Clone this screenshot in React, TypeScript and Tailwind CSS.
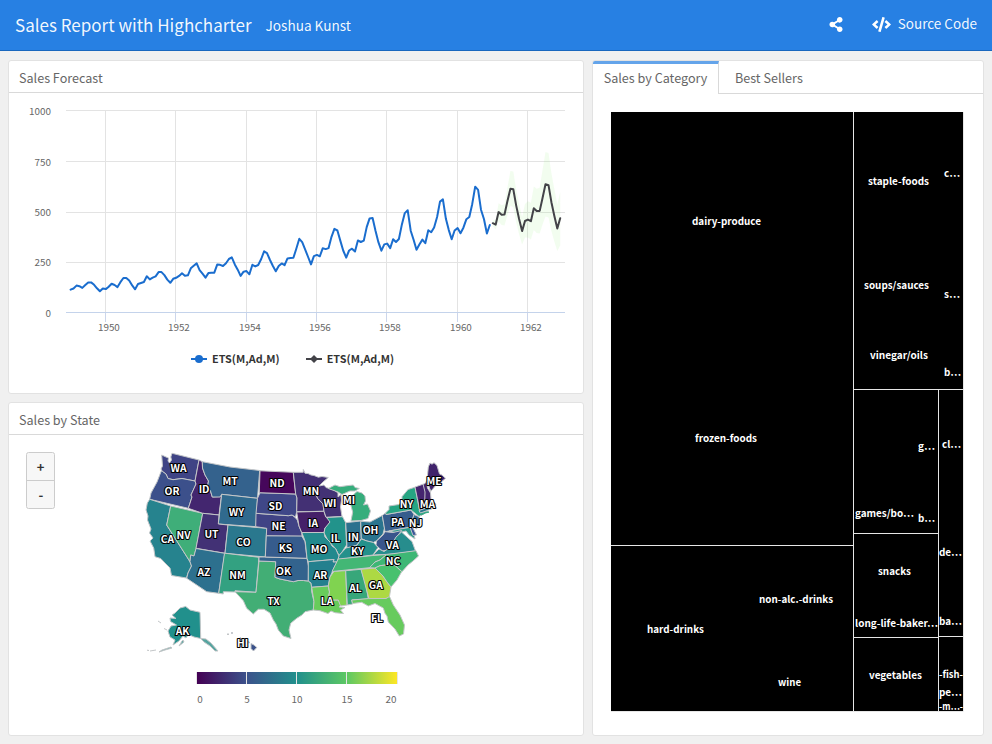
import { FaCode, FaShareAlt } from "react-icons/fa";

const AIR = [
  112, 118, 132, 129, 121, 135, 148, 148, 136, 119, 104, 118, 115, 126, 141, 135, 125, 149, 170, 170, 158, 133, 114, 140,
  145, 150, 178, 163, 172, 178, 199, 199, 184, 162, 146, 166, 171, 180, 193, 181, 183, 218, 230, 242, 209, 191, 172, 194,
  196, 196, 236, 235, 229, 243, 264, 272, 237, 211, 180, 201, 204, 188, 235, 227, 234, 264, 302, 293, 259, 229, 203, 229,
  242, 233, 267, 269, 270, 315, 364, 347, 312, 274, 237, 278, 284, 277, 317, 313, 318, 374, 413, 405, 355, 306, 271, 306,
  315, 301, 356, 348, 355, 422, 465, 467, 404, 347, 305, 336, 340, 318, 362, 348, 363, 435, 491, 505, 404, 359, 310, 337,
  360, 342, 406, 396, 420, 472, 548, 559, 463, 407, 362, 405, 417, 391, 419, 461, 472, 535, 622, 606, 508, 461, 390, 432,
];
const FORECAST = [
  441, 434, 496, 483, 484, 550, 612, 609, 528, 462, 402, 452, 459, 451, 515, 502, 502, 567, 634, 629, 545, 478, 415, 466,
];
const UPPER = [
  455, 460, 540, 530, 535, 615, 700, 697, 608, 537, 472, 536, 550, 542, 623, 612, 617, 706, 793, 788, 690, 610, 533, 595,
];
const LOWER = [
  427, 410, 450, 432, 430, 480, 527, 520, 446, 386, 336, 370, 371, 361, 408, 392, 390, 436, 475, 470, 403, 350, 303, 330,
];
const px = (month: number) => 70.6 + (month * 35.18) / 12;
const py = (value: number) => 312.3 - value * 0.202;
const line = (values: number[], start: number) =>
  values.map((v, i) => `${px(start + i).toFixed(1)},${py(v).toFixed(1)}`).join(" ");
const band = line(UPPER, 144) + " " + line(LOWER, 144).split(" ").reverse().join(" ");

const FONT = "font-['Noto_Sans_CJK_SC',sans-serif]";

const STATES: [string, string][] = [
  ["#3f4485", "M161.7 455L166 457 168.5 458 168 461 169.5 463 171.5 460 170.8 457 172 453.3 199 460 195 481 187 479.5 182 478.5 173 479.7 168 478.5 166 474 162.5 471.5 161 469 162.5 466z"],
  ["#3c508b", "M161.3 471L162.5 471.5 166 474 168 478.5 173 479.7 182 478.5 195 481 196 484 191 495 192 497 188.3 508.3 149.7 499.3 151 493 157 482z"],
  ["#26838e", "M149.7 499.3L170.7 506 166.7 525 190 561.7 191.5 566 188 573 186.5 578 171.5 575.5 170 568 165 563 160.7 558.5 155 556.7 153.7 548 150 541 153 538 149.5 533 151 529 147.5 520 148 516 146 510 147.3 503z"],
  ["#3fae79", "M170.7 506L202.7 513.3 196 549 194 556 190.7 555 190 561.7 166.7 525z"],
  ["#43266f", "M199 460L202.3 461.7 202.5 468 205 475 208.5 481 207.5 486.5 210.5 491 212.3 497 220 496.5 221.5 495 219 515 202.7 513.3 188.3 508.3 192 497 191 495 196 484 195 481z"],
  ["#34628d", "M202.3 461.7L230 467 259.7 470.5 257.5 498.3 221.7 494.3 220 497 212.3 497 210.5 491 207.5 486.5 208.5 481 205 475 202.5 468z"],
  ["#306a8e", "M221.7 494.3L257.5 498.3 256 526.7 218.3 524z"],
  ["#423175", "M202.7 513.3L219 515 218.3 524 228 525 225 553.3 196 548.3z"],
  ["#2a788e", "M228 525L266.7 528.3 265.3 557 225 553.3z"],
  ["#2d708e", "M196 548.5L224.8 553.3 218.7 593.3 206.7 591.7 186.7 578.3 188 573 191.5 566 190 561.7 190.7 555 194 556z"],
  ["#33a181", "M224.5 553.2L259 557.3 256 592.3 235 590.7 235 592 223.3 591.7 223.3 594 218.7 593.3z"],
  ["#42ae75", "M259 561L275.7 561.7 275 577.3 280 579 285 580 293.3 581.7 298 580.5 303.3 580.5 308.3 581 311.3 583.5 311.7 591.7 314 601.7 313.3 610 305 611.7 302 615 296.7 618.3 290.7 623.3 289 630 291 638.5 283.3 636 278.3 630 276 624 273.3 620 270 613 264 609.3 258.3 609.3 253.3 614 246.7 608.3 243.3 600.7 235 591.7 256 592.3z"],
  ["#33638d", "M259 557L265 557 307 558.3 308.5 566 308.3 581 303.3 580.5 298 580.5 293.3 581.7 285 580 280 579 275 577.3 275.7 561.7 259 561z"],
  ["#365c8d", "M266.3 535.7L301.7 535.7 305 541.7 307 558.3 265.3 557z"],
  ["#404385", "M256 513.3L288.3 515.7 292 515 295 517.3 297.3 520 299 526 301.7 532.5 302 536 266.3 535.7 266.7 528.3 255.7 526.7z"],
  ["#3f4788", "M260 492.7L295.7 494 297 498 296.7 511.7 295.5 517 292 515 288.3 515.7 256 513.3 257.5 498.3z"],
  ["#46075b", "M260 470.8L293.3 472.3 295.7 494 259.3 492.7z"],
  ["#433074", "M293.3 472.3L303.3 472.3 303.3 469.5 305 473.3 308 473.5 311 475 314 475.5 318.3 477.2 322 476.5 328.3 477.5 323 482 319 486 317.3 490 316 495 317.8 498.5 323 504 324 511.3 296.7 511.7 297 498 295.7 494z"],
  ["#452069", "M296.7 512L324 511.3 325.7 516.7 330 521 329 524 325 528 324 532.5 301.7 532.5 299 526z"],
  ["#433275", "M319 486L324 485 326 487.5 334 490 338 493 338 497 341 494.5 341.5 500 340.5 507 342 516.5 326 517.3 324 511.3 323 504 317.8 498.5 316 495z"],
  ["#36ad7c", "M328.3 488.5L335 485 340 486.7 347 485.7 353.3 485 355 487.5 359.3 488.5 355 491 350 491 342 494.5 338 492z"],
  ["#36ad7c", "M354 494L357 491.5 362 493 365 496 365.5 501 363.5 505 367.5 504 370.5 511 368 518.5 361 520.5 351 521 352.7 512 350.5 504z"],
  ["#22938b", "M326.5 517.5L342.5 516.7 345.7 522.7 346.5 545 342 552 339 555.5 335.5 548.5 328 540.5 324 533 325 528 330 522z"],
  ["#2d718e", "M345.7 522.7L360.5 521 361.3 538.5 357 545 347 548.5 346.5 537z"],
  ["#2b748e", "M360.7 521.3L370 522 382.3 515.5 384.5 528 383 534 377 540.5 373.3 542.5 366.7 541 361.3 538.5z"],
  ["#365d8d", "M382.3 515.5L385.5 513 386 514.5 411 510 414 514.5 412.3 520 414.5 524 410 527.3 385 531.7z"],
  ["#27a583", "M385.5 513L389 509.5 389 506 399 504.5 402 501.5 402 496.7 408 489.5 415 487.2 417.3 498.3 419.8 512 428 511.5 419 516.5 411 510 386 514.5z"],
  ["#45256f", "M415 487L425 483.5 426.5 481 427.5 488 430.5 493 431 499 436 504 434 508 429 507 419.8 510.5 417.3 498.3z"],
  ["#40236b", "M427 480.5L428.3 467 430 463 432 464.2 434 462.7 437 465.5 439.5 474 442 475 445.5 478.3 440 483 436.5 484.5 430.7 491.5z"],
  ["#2a788e", "M419 510.5L429 507 431.5 509 420.5 513z"],
  ["#31668e", "M414 514.5L419 516.7 420 523 416.5 529 413 526 414.5 524 412.3 520z"],
  ["#2b998a", "M389 531L410 527.3 414 534 415 539 409 535 406 531 402 532 397 533z"],
  ["#3b569a", "M410 527.3L412 526 416.5 535 413 535.5z"],
  ["#39558c", "M385 531.7L393 532.5 401.7 530.5 397 536.5 393 544 388 550 382.3 551 376 545 376.5 541 383 535z"],
  ["#278d8d", "M373 555L379 549 384 551.5 390 547.5 396 537 401.5 532 407 537 412 541.5 415.5 551 395 554z"],
  ["#24918b", "M337.5 560L339 555.5 346 548 357 545.3 361.3 539 367 541 373.5 542.5 378 547.5 373 555 350 558z"],
  ["#23898d", "M301.8 532.5L324 532.5 325 537 330 542 332 546 335.5 548.5 339 556 337 562 333 562 334 559.5 308.3 561.7 307 558.3 305.3 541.7z"],
  ["#24808e", "M308.3 561.7L334 559.5 333 562 337 562 334 568 330 577 328.3 586 311.7 587.3 311 583 308.3 581z"],
  ["#68cc5b", "M311.7 587.3L328.3 586 329.5 592 328 600 338.3 600 341 605 339 607 345 607.5 340.5 610 343.5 613.5 335 612.7 331 611 328 613.5 320 610.7 313.3 610 314 601.7z"],
  ["#80d350", "M334 571.3L345.7 570.7 347 605 340.5 606 338.3 600 328 600 329.5 592 328.3 586 330 577z"],
  ["#37a77a", "M345.7 570.7L361 569.3 366 585 368.3 599 351.7 600 352.7 604 347.3 605z"],
  ["#add943", "M361 569.3L375.3 568 383 576 387 582 391 587 389.3 597.5 386 598.5 369 599z"],
  ["#67cb5e", "M351.7 600L368.3 598.6 386 598.5 389.5 596.5 393.3 605 400 615 404.5 625 403.5 634 399.3 636 395 629 388.3 622 387 616 385 613.3 383.3 608 375 603.5 368.3 606 361.7 602.3 352.5 603.5z"],
  ["#43b775", "M337 561.5L338 559 373 555.5 386.7 554.5 380 560 375 562 369.5 567.7 332 571.5z"],
  ["#3eb775", "M386.7 554.5L416 550.7 418.5 556 413 561 408 565 402 571.7 395 565.5 388.3 564.7 380 565.7 375 568 369.5 567.7 375 562 380 560z"],
  ["#48c16e", "M375 568L380 565.7 388.3 564.7 395 565.5 401.7 571.7 397 580 391 587 387 582 383 576z"],
  ["#21908c", "M175 613L180 608 185.7 606.5 190 610 200 612.3 200.7 638.5 194 637 188.3 634.5 186 638 183 636 179 641 173 645 175 640 170 637 168 631 171 626 176.5 625 170.5 621.5 170 618 176 618.5 172 615z"],
  ["#55a49f", "M200.7 638.5L206 639 211 643 218 651 215 651 210 646 204 642z"],
  ["#55a49f", "M183 640L184 642 179 646 182 641zM171 647L172 648 165 650 159 652 162 650zM156 650L150 651M158 621L161 623M164 628.5L167 630M147 650.2L149 650.5"],
  ["#3b528b", "M251 643.5L254 645 256.8 647.5 253.5 651 251 648.5zM248 641.5L250 642.5 248.5 643zM240 637.5L242 639 240 639zM227 634L229 634 228 635zM231.5 632.5L233 633 231.5 633.5z"],
];

const STATE_LABELS: [string, number, number][] = [
  ["WA", 178.5, 468], ["OR", 172, 491], ["CA", 167.5, 539], ["NV", 183.5, 535], ["ID", 204, 489], ["MT", 230, 481],
  ["WY", 236.5, 512], ["UT", 211.5, 534], ["CO", 243.5, 542], ["AZ", 204, 572], ["NM", 237.5, 575], ["ND", 277, 483],
  ["SD", 275.5, 506], ["NE", 278.5, 526], ["KS", 285.5, 548], ["OK", 283.5, 571], ["TX", 273.5, 601], ["MN", 311, 491],
  ["IA", 313, 523], ["WI", 330, 503], ["MO", 319, 549], ["AR", 320.5, 575], ["LA", 327, 601], ["IL", 335.5, 538],
  ["MI", 349, 500], ["IN", 353.3, 537], ["OH", 370.5, 530], ["KY", 357.5, 551], ["PA", 397.5, 522], ["NJ", 415.5, 523],
  ["NY", 406.5, 504], ["MA", 427.5, 504], ["ME", 434, 481], ["VA", 392.5, 545], ["NC", 393, 561], ["AL", 355.5, 588],
  ["GA", 375.8, 585], ["FL", 377, 618], ["AK", 182.5, 631], ["HI", 242.5, 643],
];

const TREE_LABELS: [string, number, number, number][] = [
  ["dairy-produce", 692, 221, 69], ["frozen-foods", 695, 438, 62], ["non-alc.-drinks", 759, 599, 74],
  ["hard-drinks", 647, 629, 57], ["wine", 778, 682, 23], ["staple-foods", 868, 181, 61], ["soups/sauces", 864, 285, 65],
  ["vinegar/oils", 870, 355, 58], ["c…", 944, 173, 16], ["s…", 944, 294, 16], ["b…", 944, 372, 17], ["g…", 918, 446, 17],
  ["games/bo…", 855, 513, 59], ["b…", 918, 518, 17], ["cl…", 942, 444, 19], ["snacks", 878, 571, 33],
  ["long-life-baker…", 855, 623, 83], ["vegetables", 869, 675, 53], ["de…", 939, 552, 23], ["ba…", 939, 621, 23],
  ["-fish-", 939, 674, 24], ["pe…", 939, 692, 23], ["-m…-", 939, 706, 24],
];

function CardTitle({ children }: { children: string }) {
  return <h2 className="flex h-8 shrink-0 items-center border-b border-[#d9d9d9] pl-2.5 pt-[3px] text-[12.6px]">{children}</h2>;
}

function ForecastChart() {
  return (
    <svg viewBox="9 93 574 300" className="block h-[300px] w-[574px]">
      {[110.5, 161.5, 212.5, 262.5].map((y) => <path key={y} d={`M66 ${y}H565`} stroke="#e3e3e3" />)}
      {[105.5, 175.5, 246.5, 316.5, 386.5, 457.5, 527.5].map((x, i) => (
        <g key={x}>
          <path d={`M${x} 110V312`} stroke="#e3e3e3" />
          <path d={`M${x} 312V322`} stroke="#ccd6eb" />
          <text x={x + 3.4} y="331" fontSize="9.9" textAnchor="middle" fill="#666">{1950 + i * 2}</text>
        </g>
      ))}
      <path d="M66 312.5H565" stroke="#c4d3eb" />
      {["1000", "750", "500", "250", "0"].map((t, i) => (
        <text key={t} x="51" y={115.3 + i * 50.3} fontSize="9.9" textAnchor="end" fill="#666">{t}</text>
      ))}
      <polygon points={band} fill="#90ed7d" fillOpacity="0.12" />
      <g fill="none" strokeWidth="2" strokeLinejoin="round" strokeLinecap="round">
        <polyline points={line(AIR, 0)} stroke="#1a6dce" />
        <polyline points={line(FORECAST, 144)} stroke="#434348" />
      </g>
      <path d="M191 359H207" stroke="#1a6dce" strokeWidth="2" />
      <circle cx="199" cy="359" r="4" fill="#1a6dce" />
      <path d="M306 359H322" stroke="#434348" strokeWidth="2" />
      <path d="M314 355L318 359 314 363 310 359z" fill="#434348" />
      <g fontSize="10.8" fontWeight="700" fill="#333">
        <text x="212" y="363" textLength="67.5">ETS(M,Ad,M)</text>
        <text x="326.7" y="363" textLength="67.5">ETS(M,Ad,M)</text>
      </g>
    </svg>
  );
}

function StateMap() {
  return (
    <svg viewBox="9 435 574 300" className="block h-[300px] w-[574px]">
      <defs>
        <linearGradient id="viridis">
          <stop offset="0" stopColor="#440154" />
          <stop offset="0.25" stopColor="#3b528b" />
          <stop offset="0.5" stopColor="#21908c" />
          <stop offset="0.75" stopColor="#5dc863" />
          <stop offset="1" stopColor="#fde725" />
        </linearGradient>
      </defs>
      <g stroke="#c3c6c8" strokeWidth="1" strokeLinejoin="round">
        {STATES.map(([fill, d]) => <path key={d} fill={fill} d={d} />)}
      </g>
      <path d="M423 484L425 492 424.5 508.5M426.5 481L430.5 491" stroke="#c3c6c8" fill="none" />
      <path d="M421 515L426 512.5 429 512" stroke="#35a884" strokeWidth="1.3" fill="none" />
      <g fontSize="10.3" fontWeight="700" fill="#fff" stroke="#000" strokeWidth="2.2" strokeLinejoin="round" paintOrder="stroke" textAnchor="middle">
        {STATE_LABELS.map(([t, x, y]) => <text key={t} x={x} y={y + 4}>{t}</text>)}
      </g>
      <g fill="#f7f7f7" stroke="#ccc">
        <rect x="26.5" y="452.5" width="28" height="56" rx="2" />
        <path d="M26.5 480.5H54.5" />
      </g>
      <g fontSize="13" fontWeight="700" fill="#333" textAnchor="middle">
        <text x="40.5" y="472">+</text>
        <text x="40.8" y="500">-</text>
      </g>
      <rect x="197" y="672" width="200" height="12" fill="url(#viridis)" />
      <path d="M196.5 672V684M246.5 672V684M296.5 672V684M346.5 672V684M397.5 672V684" stroke="#e6e6e6" />
      <g fontSize="9.9" fill="#666" textAnchor="middle">
        <text x="200" y="703">0</text>
        <text x="247" y="703">5</text>
        <text x="297" y="703">10</text>
        <text x="347" y="703">15</text>
        <text x="391" y="703">20</text>
      </g>
    </svg>
  );
}

function CategoryTreemap() {
  return (
    <svg viewBox="593 94 390 641" className="block h-[641px] w-[390px]">
      <rect x="611" y="112" width="352" height="599" />
      <path
        d="M853.5 112V711M611 545.5H853M853 389.5H963M938.5 389V711M853 533.5H938M853 637.5H938M938 636.5H963M963.5 112V711.5M611 711.5H963"
        stroke="#e6e6e6"
        fill="none"
      />
      <g fontSize="9.9" fontWeight="700" fill="#fff">
        {TREE_LABELS.map(([t, x, y, w]) => (
          <text key={`${t}${y}`} x={x} y={y + 4} textLength={w} lengthAdjust="spacingAndGlyphs">{t}</text>
        ))}
      </g>
    </svg>
  );
}

export default function App() {
  const card = "flex flex-col overflow-hidden rounded-[3px] border border-[#e2e2e2] bg-white";
  return (
    <div className={`flex h-[744px] w-[992px] flex-col overflow-hidden bg-[#f0f0f0] text-[#666] ${FONT}`}>
      <header className="flex h-[51px] shrink-0 items-center border-b border-[#1967be] bg-[#2780e3] px-[15px] text-white/95">
        <h1 className="pb-0.5 text-[17px] leading-none">Sales Report with Highcharter</h1>
        <span className="ml-3.5 pt-px text-[13.6px] leading-none">Joshua Kunst</span>
        <FaShareAlt className="mb-0.5 ml-auto mr-[29px] h-[15px] w-[14px] text-white" />
        <FaCode className="mb-0.5 mr-[7px] h-[15px] w-[19px] text-white" />
        <span className="pb-0.5 text-[13.5px] leading-none">Source Code</span>
      </header>
      <main className="flex gap-2 px-2 pb-2 pt-[9px]">
        <div className="flex flex-col gap-2">
          <section className={`${card} h-[334px] w-[576px]`}>
            <CardTitle>Sales Forecast</CardTitle>
            <ForecastChart />
          </section>
          <section className={`${card} h-[334px] w-[576px]`}>
            <CardTitle>Sales by State</CardTitle>
            <StateMap />
          </section>
        </div>
        <section className={`${card} h-[676px] w-[392px]`}>
          <nav className="flex h-[33px] shrink-0 text-[12.6px]">
            <span className="flex w-[126px] items-center justify-center whitespace-nowrap border-r border-t-[3px] border-r-[#d9d9d9] border-t-[#64a4ea] pb-px">
              Sales by Category
            </span>
            <span className="flex flex-1 items-center border-b border-[#d9d9d9] pl-4 pt-0.5">Best Sellers</span>
          </nav>
          <CategoryTreemap />
        </section>
      </main>
    </div>
  );
}
